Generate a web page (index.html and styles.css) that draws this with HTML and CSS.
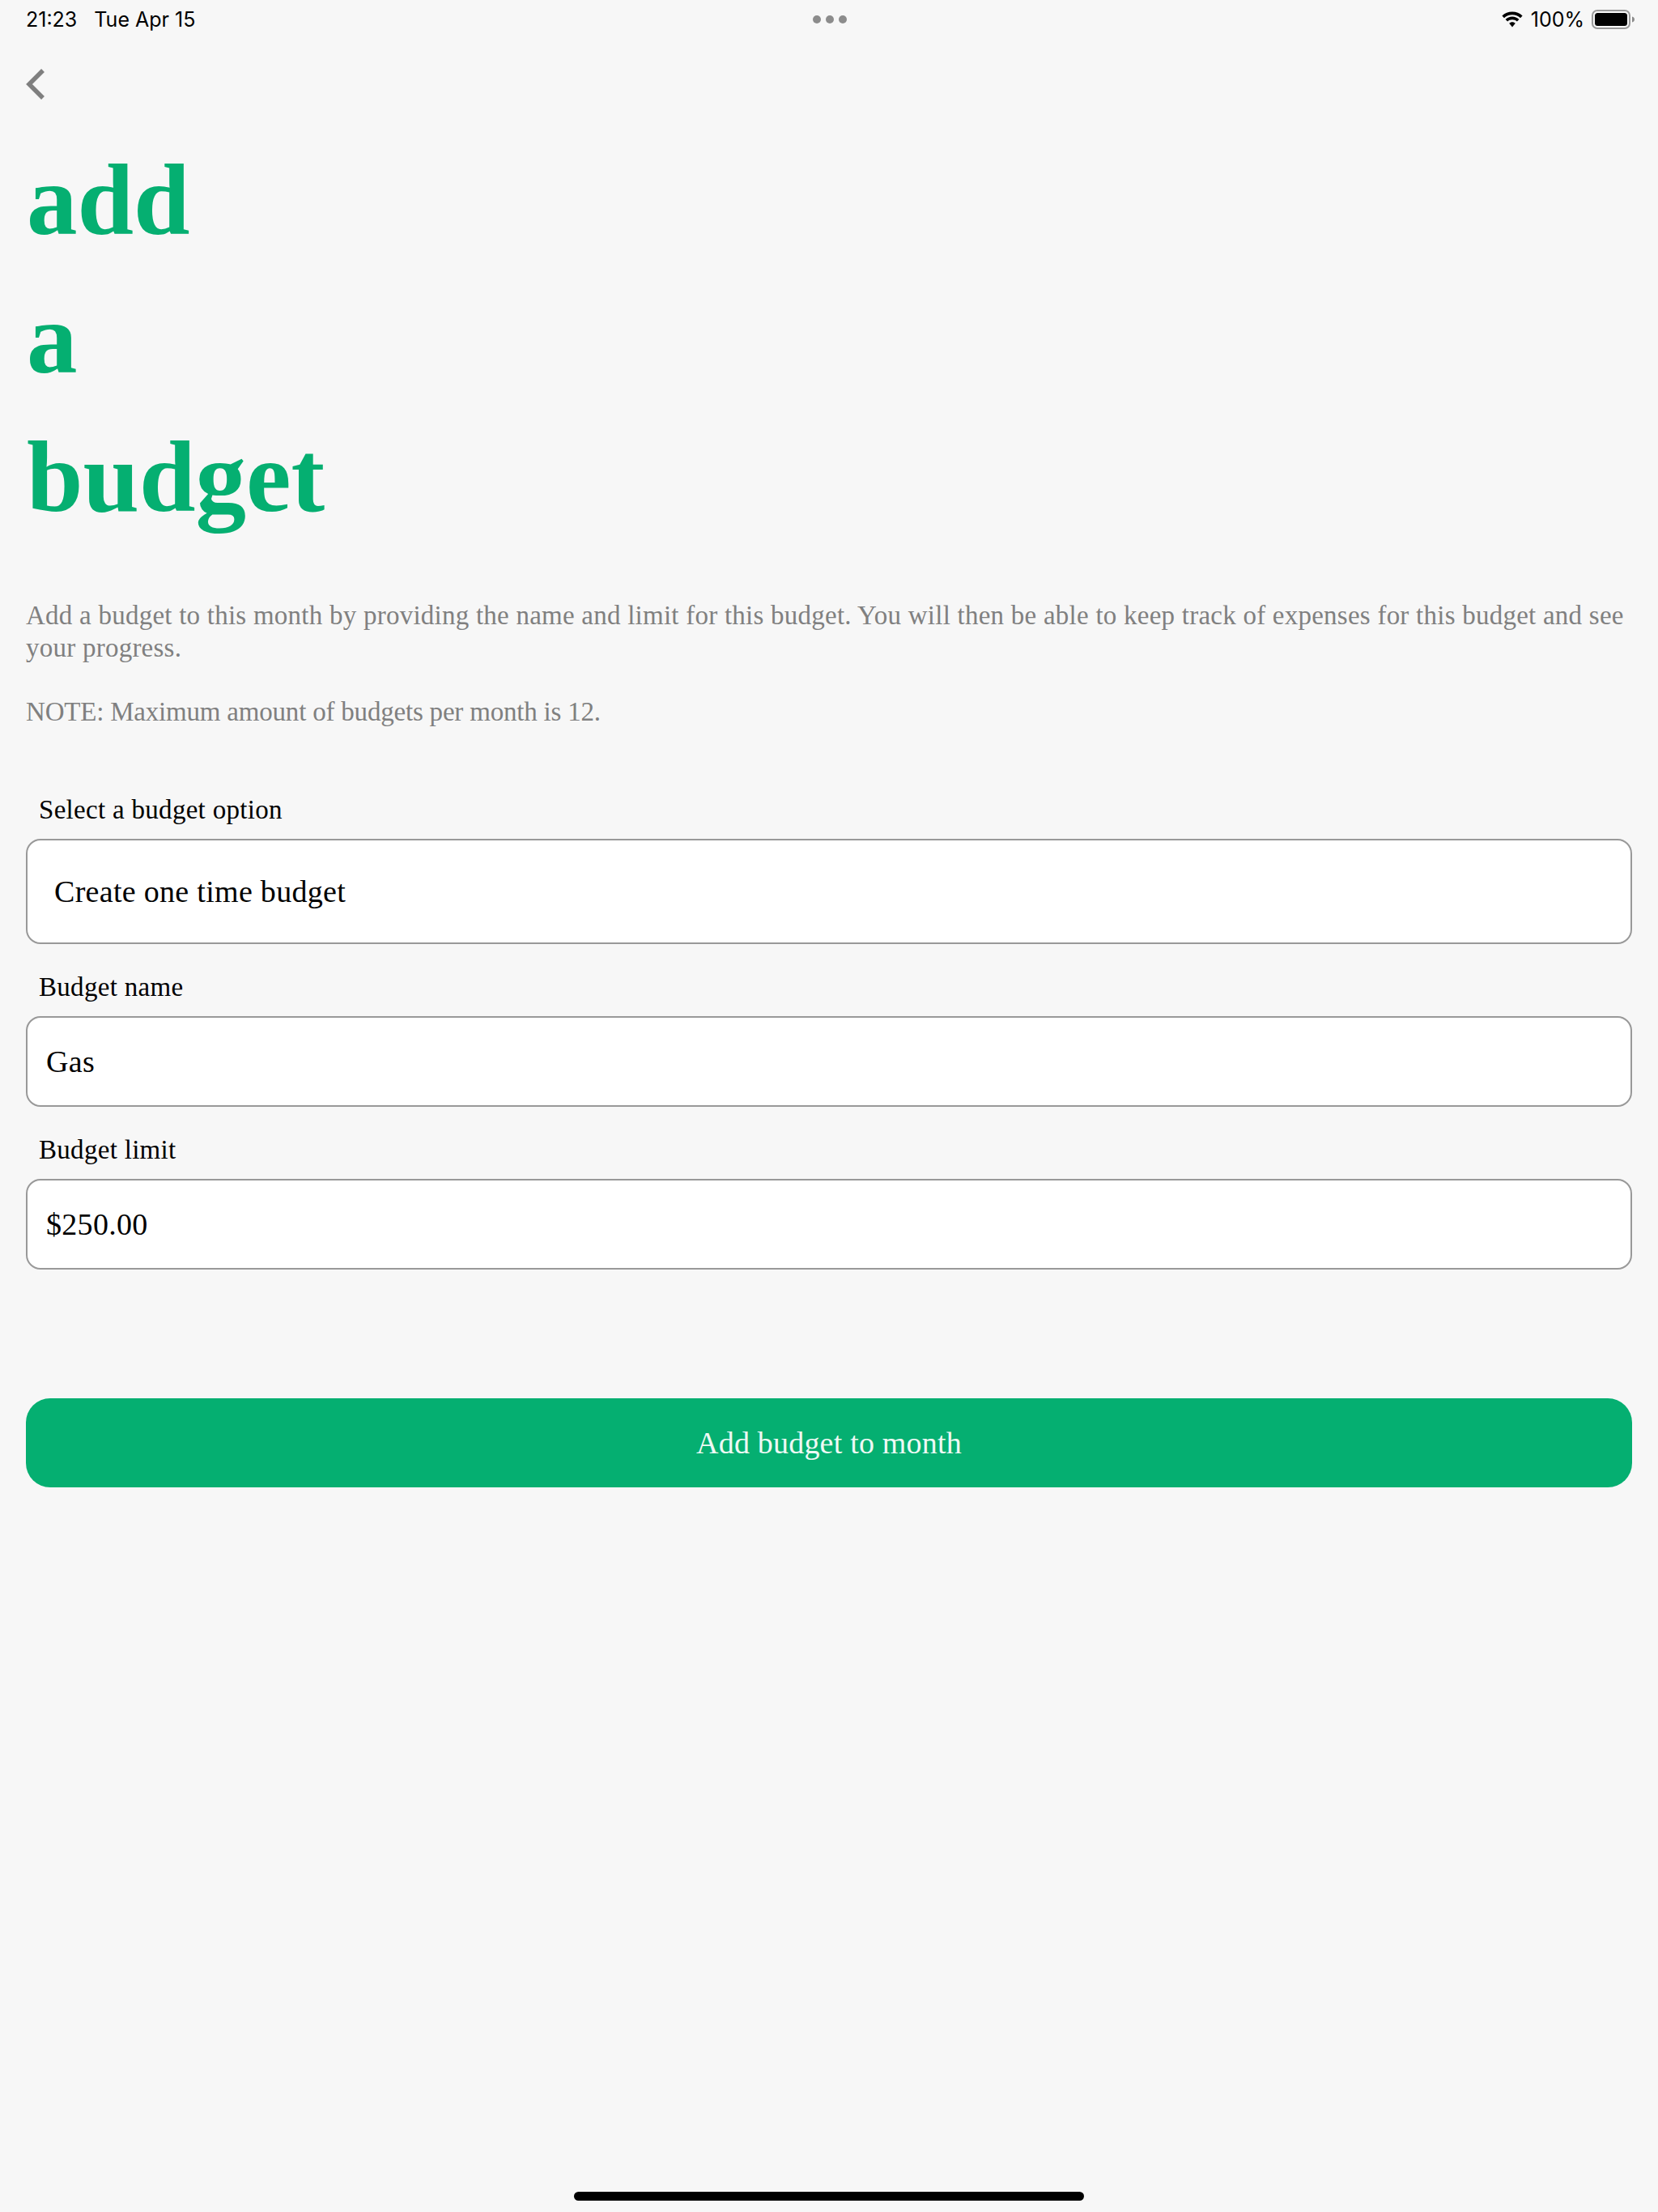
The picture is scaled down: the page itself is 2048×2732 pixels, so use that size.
FILE: index.html
```html
<!DOCTYPE html>
<html lang="en">
<head>
<meta charset="UTF-8">
<meta name="viewport" content="width=device-width, initial-scale=1.0">
<title>Add a budget</title>
<link rel="stylesheet" href="styles.css">
</head>
<body>

<div class="status-bar">
    <div class="status-left"><span>21:23</span><span>Tue Apr 15</span></div>
    <div class="status-dots"><i></i><i></i><i></i></div>
    <div class="status-right">
        <svg class="wifi" viewBox="0 0 28 20" width="28" height="20">
            <path d="M14 4.200c3.900 0 7.400 1.500 10 4l2.600-2.700C23.300 2.300 18.900.5 14 .5S4.700 2.300 1.400 5.500L4 8.200c2.600-2.500 6.100-4 10-4z"/>
            <path d="M14 10.200c2.300 0 4.400.9 5.900 2.300l2.500-2.600C20.200 7.800 17.200 6.500 14 6.500s-6.200 1.300-8.400 3.400l2.500 2.600c1.500-1.400 3.600-2.300 5.900-2.300z"/>
            <path d="M14 13.200c-1.500 0-2.800.6-3.800 1.500L14 19.500l3.800-4.800C16.800 13.800 15.500 13.200 14 13.200z"/>
        </svg>
        <span>100%</span>
        <svg class="battery" viewBox="0 0 54 24" width="54" height="24">
            <rect x="1" y="1" width="46" height="22" rx="6" fill="none" stroke="#999" stroke-width="2"/>
            <rect x="4" y="4" width="40" height="16" rx="3.500" fill="#000"/>
            <path d="M50 8.500c1.800.5 3 1.800 3 3.500s-1.200 3-3 3.500z" fill="#8a8a8a"/>
        </svg>
    </div>
</div>

<div class="page">
    <a class="back" href="#">
        <svg viewBox="0 0 24 40" width="24" height="40">
            <path d="M21 3 4 20l17 17" fill="none" stroke="#7f7f7f" stroke-width="5.500"/>
        </svg>
    </a>

    <h1 class="title">add<br>a<br>budget</h1>

    <p class="intro">Add a budget to this month by providing the name and limit for this budget. You will then be able to keep track of expenses for this budget and see your progress.</p>
    <p class="intro note">NOTE: Maximum amount of budgets per month is 12.</p>

    <form class="budget-form">
        <label class="field-label">Select a budget option</label>
        <div class="select-box">Create one time budget</div>

        <label class="field-label" for="budget-name">Budget name</label>
        <input class="text-box" type="text" id="budget-name" value="Gas">

        <label class="field-label" for="budget-limit">Budget limit</label>
        <input class="text-box" type="text" id="budget-limit" value="$250.00">

        <button class="submit" type="button">Add budget to month</button>
    </form>
</div>

<div class="home-indicator"></div>

</body>
</html>
```

FILE: styles.css
```css
* {
    box-sizing: border-box;
}

body {
    margin: 0;
    height: 2732px;
    display: flex;
    flex-direction: column;
    background-color: #f7f7f7;
    color: #000;
    font-family: "Liberation Serif", serif;
}

/* Status bar */
.status-bar {
    height: 48px;
    padding: 0 30px 0 32px;
    display: grid;
    grid-template-columns: 1fr auto 1fr;
    align-items: center;
    font-family: Inter, sans-serif;
    font-size: 25px;
}

.status-left {
    display: flex;
    gap: 21px;
}

.status-dots {
    display: flex;
    gap: 6px;
}

.status-dots i {
    width: 10px;
    height: 10px;
    border-radius: 50%;
    background-color: #8c8c8c;
}

.status-right {
    display: flex;
    justify-content: flex-end;
    align-items: center;
    gap: 9px;
    margin-right: -2px;
}

/* Page */
.page {
    flex: 1;
    padding: 36px 32px 0;
}

.back {
    display: block;
    width: 24px;
    height: 40px;
}

.back svg {
    display: block;
}

.title {
    margin: 38px 0 0 1px;
    font-size: 125px;
    line-height: 171px;
    font-weight: 700;
    color: #05af71;
}

.intro {
    margin: 65px 0 0;
    font-size: 33px;
    letter-spacing: 0.24px;
    line-height: 40px;
    color: #808080;
}

.intro.note {
    margin-top: 39px;
    letter-spacing: -0.2px;
}

/* Form */
.budget-form {
    margin-top: 81px;
    display: flex;
    flex-direction: column;
}

.field-label {
    margin: 0 0 18px 16px;
    height: 38px;
    font-size: 33px;
    letter-spacing: 0.3px;
    line-height: 40px;
}

.select-box,
.text-box {
    width: 100%;
    margin-bottom: 33px;
    background-color: #fff;
    border: 2px solid #999;
    border-radius: 18px;
    color: #000;
    font-family: "Liberation Serif", serif;
    font-size: 38px;
    letter-spacing: 0.3px;
}

.select-box {
    height: 130px;
    padding-left: 33px;
    display: flex;
    align-items: center;
}

.text-box {
    height: 112px;
    padding: 0 0 0 23px;
    outline: none;
}

.submit {
    margin-top: 126px;
    height: 110px;
    border: none;
    border-radius: 30px;
    background-color: #05af71;
    color: #eef9f4;
    font-family: "Liberation Serif", serif;
    font-size: 38px;
    letter-spacing: 0.2px;
}

/* Home indicator */
.home-indicator {
    align-self: center;
    width: 630px;
    height: 11px;
    margin-bottom: 14px;
    border-radius: 6px;
    background-color: #000;
}
```
